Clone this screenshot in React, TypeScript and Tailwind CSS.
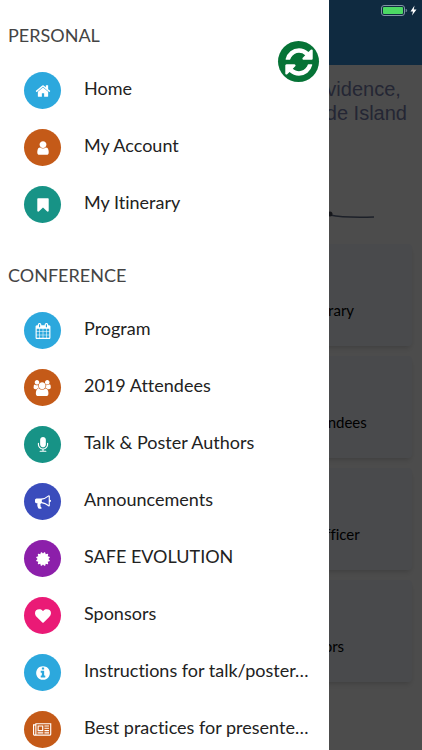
import React from "react";

type Glyph = { box: string; d: string };

const GLYPHS: Record<string, Glyph> = {
  home: { box: "0 0 1792 1792", d: "M1472 992v480q0 26-19 45t-45 19h-384v-384h-256v384h-384q-26 0-45-19t-19-45v-480q0-1 .5-3t.5-3l575-474 575 474q1 2 1 6zm223-69l-62 74q-8 9-21 11h-3q-13 0-21-7l-692-577-692 577q-12 8-24 7-13-2-21-11l-62-74q-8-10-7-23.5t11-21.5l719-599q32-26 76-26t76 26l244 204v-195q0-14 9-23t23-9h192q14 0 23 9t9 23v408l219 182q10 8 11 21.5t-7 23.5z" },
  user: { box: "0 0 1792 1792", d: "M1536 1399q0 109-62.5 187t-150.5 78h-854q-88 0-150.5-78t-62.5-187q0-85 8.5-160.5t31.5-152 58.5-131 94-89 134.5-34.5q131 128 313 128t313-128q76 0 134.5 34.5t94 89 58.5 131 31.5 152 8.5 160.5zm-256-887q0 159-112.5 271.5t-271.5 112.5-271.5-112.5-112.5-271.5 112.5-271.5 271.5-112.5 271.5 112.5 112.5 271.5z" },
  bookmark: { box: "0 0 1792 1792", d: "M1420 128q23 0 44 9 33 13 52.5 41t19.5 62v1289q0 34-19.5 62t-52.5 41q-19 8-44 8-48 0-83-32l-441-424-441 424q-36 33-83 33-23 0-44-9-33-13-52.5-41t-19.5-62v-1289q0-34 19.5-62t52.5-41q21-9 44-9h1048z" },
  calendar: { box: "0 0 1792 1792", d: "M192 1664h288v-288h-288v288zm352 0h320v-288h-320v288zm-352-352h288v-320h-288v320zm352 0h320v-320h-320v320zm-352-384h288v-288h-288v288zm736 736h320v-288h-320v288zm-384-736h320v-288h-320v288zm768 736h288v-288h-288v288zm-384-352h320v-320h-320v320zm-352-864v-288q0-13-9.5-22.5t-22.5-9.5h-64q-13 0-22.5 9.5t-9.5 22.5v288q0 13 9.5 22.5t22.5 9.5h64q13 0 22.5-9.5t9.5-22.5zm736 864h288v-320h-288v320zm-384-384h320v-288h-320v288zm384 0h288v-288h-288v288zm32-480v-288q0-13-9.5-22.5t-22.5-9.5h-64q-13 0-22.5 9.5t-9.5 22.5v288q0 13 9.5 22.5t22.5 9.5h64q13 0 22.5-9.5t9.5-22.5zm384-64v1280q0 52-38 90t-90 38h-1408q-52 0-90-38t-38-90v-1280q0-52 38-90t90-38h128v-96q0-66 47-113t113-47h64q66 0 113 47t47 113v96h384v-96q0-66 47-113t113-47h64q66 0 113 47t47 113v96h128q52 0 90 38t38 90z" },
  users: { box: "0 0 2048 1792", d: "M657 896q-162 5-265 128h-134q-82 0-138-40.5t-56-118.5q0-353 124-353 6 0 43.5 21t97.5 42.5 119 21.5q67 0 133-23-5 37-5 66 0 159 93 294zm1071 637q0 120-73 189.5t-194 69.5h-874q-121 0-194-69.5t-73-189.5q0-53 3.5-103.5t14-109 26.5-108.5 43-97.5 62-81 85.5-53.5 111.5-20q10 0 43 21.5t73 48 107 48 135 21.5 135-21.5 107-48 73-48 43-21.5q61 0 111.5 20t85.5 53.5 62 81 43 97.5 26.5 108.5 14 109 3.5 103.5zm-1024-1277q0 106-75 181t-181 75-181-75-75-181 75-181 181-75 181 75 75 181zm704 384q0 159-112.5 271.5t-271.5 112.5-271.5-112.5-112.5-271.5 112.5-271.5 271.5-112.5 271.5 112.5 112.5 271.5zm576 225q0 78-56 118.5t-138 40.5h-134q-103-123-265-128 93-135 93-294 0-29-5-66 66 23 133 23 59 0 119-21.5t97.5-42.5 43.5-21q124 0 124 353zm-128-609q0 106-75 181t-181 75-181-75-75-181 75-181 181-75 181 75 75 181z" },
  microphone: { box: "0 0 1792 1792", d: "M1472 704v128q0 221-147.5 384.5t-364.5 187.5v132h256q26 0 45 19t19 45-19 45-45 19h-640q-26 0-45-19t-19-45 19-45 45-19h256v-132q-217-24-364.5-187.5t-147.5-384.5v-128q0-26 19-45t45-19 45 19 19 45v128q0 185 131.5 316.5t316.5 131.5 316.5-131.5 131.5-316.5v-128q0-26 19-45t45-19 45 19 19 45zm-256-384v512q0 132-94 226t-226 94-226-94-94-226v-512q0-132 94-226t226-94 226 94 94 226z" },
  bullhorn: { box: "0 0 1792 1792", d: "M1664 640q53 0 90.5 37.5t37.5 90.5-37.5 90.5-90.5 37.5v384q0 52-38 90t-90 38q-417-347-812-380-58 19-91 66t-31 100.5 40 92.5q-20 33-23 65.5t6 58 33.5 55 48 50 61.5 50.5q-29 58-111.5 83t-168.5 11.5-132-55.5q-7-23-29.5-87.5t-32-94.5-23-89-15-101 3.5-98.5 22-110.5h-122q-66 0-113-47t-47-113v-192q0-66 47-113t113-47h480q435 0 896-384 52 0 90 38t38 90v384zm-128 604v-954q-394 302-768 343v270q377 42 768 341z" },
  certificate: { box: "0 0 1792 1792", d: "M1504 896l138 135q30 28 20 70-12 41-52 51l-188 48 53 186q12 41-19 70-29 31-70 19l-186-53-48 188q-10 40-51 52-12 2-19 2-31 0-51-22l-135-138-135 138q-28 30-70 20-41-11-51-52l-48-188-186 53q-41 12-70-19-31-29-19-70l53-186-188-48q-40-10-52-51-10-42 20-70l138-135-138-135q-30-28-20-70 12-41 52-51l188-48-53-186q-12-41 19-70 29-31 70-19l186 53 48-188q10-41 51-51 41-12 70 19l135 139 135-139q29-30 70-19 41 10 51 51l48 188 186-53q41-12 70 19 31 29 19 70l-53 186 188 48q40 10 52 51 10 42-20 70z" },
  heart: { box: "0 0 1792 1792", d: "M896 1664q-26 0-44-18l-624-602q-10-8-27.5-26t-55.5-65.5-68-97.5-53.5-121-23.5-138q0-220 127-344t351-124q62 0 126.5 21.5t120 58 95.5 68.5 76 68q36-36 76-68t95.5-68.5 120-58 126.5-21.5q224 0 351 124t127 344q0 221-229 450l-623 600q-18 18-44 18z" },
  info: { box: "0 0 1792 1792", d: "M1152 1376v-160q0-14-9-23t-23-9h-96v-512q0-14-9-23t-23-9h-320q-14 0-23 9t-9 23v160q0 14 9 23t23 9h96v320h-96q-14 0-23 9t-9 23v160q0 14 9 23t23 9h448q14 0 23-9t9-23zm-128-896v-160q0-14-9-23t-23-9h-192q-14 0-23 9t-9 23v160q0 14 9 23t23 9h192q14 0 23-9t9-23zm640 416q0 209-103 385.5t-279.5 279.5-385.5 103-385.5-103-279.5-279.5-103-385.5 103-385.5 279.5-279.5 385.5-103 385.5 103 279.5 279.5 103 385.5z" },
  newspaper: { box: "0 0 2048 1792", d: "M1024 512h-384v384h384v-384zm128 640v128h-640v-128h640zm0-768v640h-640v-640h640zm640 768v128h-512v-128h512zm0-256v128h-512v-128h512zm0-256v128h-512v-128h512zm0-256v128h-512v-128h512zm-1536 960v-960h-128v960q0 26 19 45t45 19 45-19 19-45zm1664 0v-1088h-1536v1088q0 33-11 64h1483q26 0 45-19t19-45zm128-1216v1216q0 80-56 136t-136 56h-1664q-80 0-136-56t-56-136v-1088h256v-128h1792z" },
  refresh: { box: "0 0 1792 1792", d: "M1639 1056q0 5-1 7-64 268-268 434.5t-478 166.5q-146 0-282.5-55t-243.5-157l-129 129q-19 19-45 19t-45-19-19-45v-448q0-26 19-45t45-19h448q26 0 45 19t19 45-19 45l-137 137q71 66 161 102t187 36q134 0 250-65t186-179q11-17 53-117 8-23 30-23h192q13 0 22.5 9.5t9.5 22.5zm25-800v448q0 26-19 45t-45 19h-448q-26 0-45-19t-19-45 19-45l138-138q-148-137-349-137-134 0-250 65t-186 179q-11 17-53 117-8 23-30 23h-199q-13 0-22.5-9.5t-9.5-22.5v-7q65-268 270-434.5t480-166.5q146 0 284 55.5t245 156.5l130-129q19-19 45-19t45 19 19 45z" },
};

function Icon({ name, className }: { name: string; className: string }) {
  const glyph = GLYPHS[name];
  return (
    <svg viewBox={glyph.box} className={className} fill="currentColor" aria-hidden="true">
      <path d={glyph.d} />
    </svg>
  );
}

type Item = { label: string; icon: string; color: string };

const PERSONAL: Item[] = [
  { label: "Home", icon: "home", color: "bg-[#2ca8dd]" },
  { label: "My Account", icon: "user", color: "bg-[#c45a18]" },
  { label: "My Itinerary", icon: "bookmark", color: "bg-[#179386]" },
];

const CONFERENCE: Item[] = [
  { label: "Program", icon: "calendar", color: "bg-[#2ca8dd]" },
  { label: "2019 Attendees", icon: "users", color: "bg-[#c45a18]" },
  { label: "Talk & Poster Authors", icon: "microphone", color: "bg-[#179386]" },
  { label: "Announcements", icon: "bullhorn", color: "bg-[#3a4cbc]" },
  { label: "SAFE EVOLUTION", icon: "certificate", color: "bg-[#8c1faa]" },
  { label: "Sponsors", icon: "heart", color: "bg-[#ea1a76]" },
  { label: "Instructions for talk/poster…", icon: "info", color: "bg-[#2ca8dd]" },
  { label: "Best practices for presente…", icon: "newspaper", color: "bg-[#c45a18]" },
];

const TILES = ["My Itinerary", "2019 Attendees", "Safety Officer", "Sponsors"];

function MenuSection({ title, items }: { title: string; items: Item[] }) {
  return (
    <section>
      <h2 className="px-2 pb-[15px] text-lg leading-6 text-[#444444]">{title}</h2>
      <ul>
        {items.map((item) => (
          <li key={item.label}>
            <a href="#" className="flex h-[57px] items-center pl-6">
              <span className={"flex size-[37px] shrink-0 items-center justify-center rounded-full text-white " + item.color}>
                <Icon name={item.icon} className="h-4" />
              </span>
              <span className="ml-[23px] pb-1.5 text-lg whitespace-nowrap text-[#222222]">{item.label}</span>
            </a>
          </li>
        ))}
      </ul>
    </section>
  );
}

function Battery() {
  return (
    <svg viewBox="0 0 36 12" className="absolute top-1 right-[5px] h-3 w-9" aria-hidden="true">
      <rect x="0.5" y="1.5" width="23" height="10" rx="2.5" fill="none" stroke="#7f93a3" />
      <rect x="2" y="3" width="20" height="7" rx="1" fill="#4cd964" />
      <path d="M25 5q1.5 1.5 0 3z" fill="#7f93a3" stroke="#7f93a3" strokeWidth="0.5" />
      <path d="M33.5 1.5l-4 6h2.5l-1 4 4.5-6h-2.7z" fill="#ffffff" />
    </svg>
  );
}

export default function App() {
  return (
    <div className="relative h-screen overflow-hidden bg-white font-['Lato','Open_Sans',sans-serif] [font-variant-ligatures:none]">
      <main>
        <div className="h-[65px] bg-[#328cd5]" />
        <p className="mr-[15px] ml-auto w-fit pt-3 text-center font-['Liberation_Sans',Arial,sans-serif] text-xl leading-6 text-[#7a7fae]">
          Providence,
          <br />
          Rhode Island
        </p>
        <svg viewBox="0 0 100 100" className="mr-12 ml-auto size-[100px]" fill="none" aria-hidden="true">
          <path d="M56 90Q70 93 100 92" stroke="#5f6c88" strokeWidth="1.5" />
          <circle cx="56" cy="89" r="2.5" fill="#4a4f5c" />
        </svg>
        <ul className="grid grid-cols-2 gap-[10px] px-[10px] pt-[19px]">
          {TILES.map((label) => (
            <li key={label} className="col-start-2 flex h-[102px] items-end justify-center rounded bg-[#f3f8ff] pb-6 text-[15px] leading-6 text-black shadow-md">
              {label}
            </li>
          ))}
        </ul>
      </main>
      <div className="absolute inset-0 bg-black/70" />
      <Battery />
      <nav aria-label="Main menu" className="absolute inset-y-0 left-0 flex w-[78%] flex-col gap-[30px] overflow-hidden bg-white pt-[23px]">
        <MenuSection title="PERSONAL" items={PERSONAL} />
        <MenuSection title="CONFERENCE" items={CONFERENCE} />
        <button aria-label="Refresh" className="absolute top-[41px] right-[10px] flex size-[41px] items-center justify-center rounded-full bg-[#067336] text-white">
          <Icon name="refresh" className="size-8" />
        </button>
      </nav>
    </div>
  );
}
